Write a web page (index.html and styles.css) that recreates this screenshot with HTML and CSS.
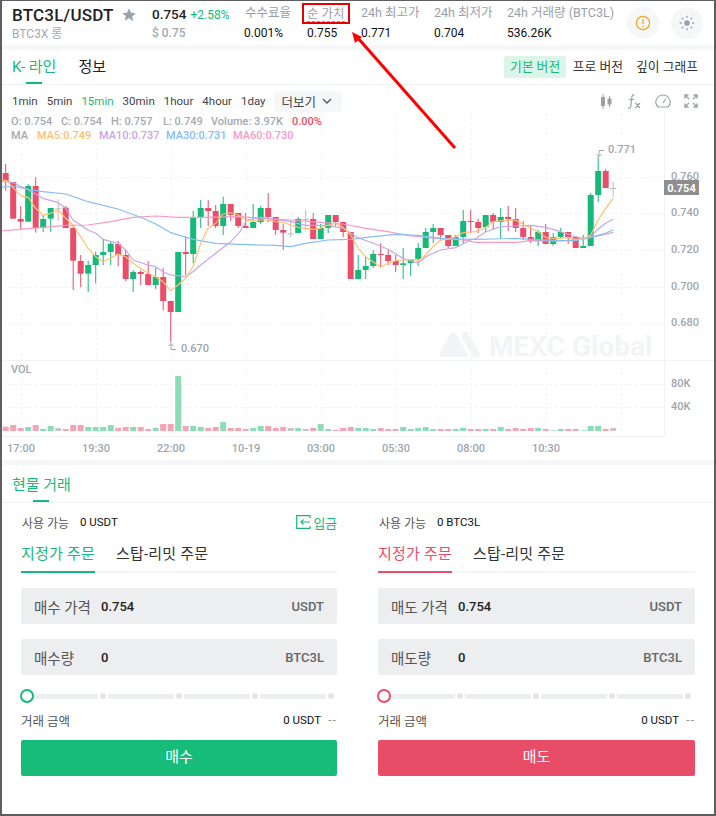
FILE: index.html
```html
<!DOCTYPE html>
<html lang="ko">

<head>
    <meta charset="UTF-8">
    <meta name="viewport" content="width=device-width, initial-scale=1.0">
    <title>BTC3L/USDT</title>
    <link rel="stylesheet" href="styles.css">
</head>

<body>
    <div class="frame">
        <!-- 상단 시세 -->
        <div class="header">
            <div class="symbol">
                <div class="symbol-name">BTC3L/USDT
                    <svg class="star" viewBox="0 0 14 14"><path d="M7 0.3l2 4.4 4.8.5-3.6 3.2 1 4.8L7 10.3l-4.2 2.4 1-4.8L.2 5.2 5 4.7z" /></svg>
                </div>
                <div class="symbol-sub">BTC3X 롱</div>
            </div>
            <div class="stat stat-price">
                <div class="price-line"><span class="price">0.754</span> <span class="change">+2.58%</span></div>
                <div class="stat-value muted">$ 0.75</div>
            </div>
            <div class="stat stat-fee">
                <div class="stat-label">수수료율</div>
                <div class="stat-value">0.001%</div>
            </div>
            <div class="stat stat-nav">
                <div class="stat-label nav-label"><span>순 가치</span></div>
                <div class="stat-value">0.755</div>
            </div>
            <div class="stat stat-high">
                <div class="stat-label">24h 최고가</div>
                <div class="stat-value">0.771</div>
            </div>
            <div class="stat stat-low">
                <div class="stat-label">24h 최저가</div>
                <div class="stat-value">0.704</div>
            </div>
            <div class="stat">
                <div class="stat-label">24h 거래량 (BTC3L)</div>
                <div class="stat-value">536.26K</div>
            </div>
            <div class="round-btns">
                <div class="round-btn">
                    <svg viewBox="0 0 16 16" fill="none" stroke="#f5a623" stroke-width="1.3"><circle cx="8" cy="8" r="6.6" /><path d="M8 4v5M8 10.8v1.2" /></svg>
                </div>
                <div class="round-btn">
                    <svg viewBox="0 0 18 18" fill="#9aa0a8" stroke="#9aa0a8" stroke-width="1.5"><circle cx="9" cy="9" r="3.2" stroke="none" /><path d="M9 .8v2.4M9 14.8v2.4M.8 9h2.4M14.8 9h2.4M3.2 3.2l1.7 1.7M13.1 13.1l1.7 1.7M3.2 14.8l1.7-1.7M13.1 4.9l1.7-1.7" /></svg>
                </div>
            </div>
        </div>
        <div class="strip"></div>

        <!-- 차트 탭 -->
        <div class="tabs">
            <a class="tab active" href="#">K- 라인</a>
            <a class="tab" href="#">정보</a>
            <div class="versions">
                <a class="version on" href="#">기본 버전</a>
                <a class="version" href="#">프로 버전</a>
                <a class="version" href="#">깊이 그래프</a>
            </div>
        </div>

        <div class="toolbar">
            <span>1min</span>
            <span>5min</span>
            <span class="on">15min</span>
            <span>30min</span>
            <span>1hour</span>
            <span>4hour</span>
            <span>1day</span>
            <div class="more">더보기
                <svg viewBox="0 0 10 6" fill="none" stroke="#555" stroke-width="1.3"><path d="M1 1l4 4 4-4" /></svg>
            </div>
            <div class="tools">
                <svg class="tool-candle" viewBox="0 0 12 15" fill="#9aa0a8" stroke="#9aa0a8"><path d="M3 0v15M9.5 2v11" /><rect x="1" y="3" width="4" height="9" stroke="none" /><rect x="7.5" y="4.5" width="4" height="6" stroke="none" /></svg>
                <svg class="tool-fx" viewBox="0 0 14 15" fill="none" stroke="#9aa0a8" stroke-width="1.2"><path d="M7.5 1C5.5 .4 5 1.5 4.8 3.5L3.8 12c-.2 1.8-1 2.5-2.8 2M2 5.5h5M8.5 9l4.5 5M13 9l-4.5 5" /></svg>
                <svg class="tool-gauge" viewBox="0 0 16 14" fill="none" stroke="#9aa0a8" stroke-width="1.2"><path d="M3 13h10c3-3.500 2.500-6.500 1-8.500C12.500 2 10.500 1 8 1S3.500 2 2 4.500C.5 6.500 0 9.500 3 13z" /><path d="M8 9l3-4.500" /></svg>
                <svg class="tool-full" viewBox="0 0 14 14" fill="none" stroke="#9aa0a8" stroke-width="1.4"><path d="M1 4.500V1h3.500M1 1l4 4M13 4.500V1H9.500M13 1L9 5M1 9.500V13h3.500M1 13l4-4M13 9.500V13H9.500M13 13L9 9" /></svg>
            </div>
        </div>

        <!-- 차트 -->
        <div class="chart">
            <div class="legend">
                <div class="legend-row">
                    <span class="w-o">O: 0.754</span>
                    <span class="w-o">C: 0.754</span>
                    <span class="w-h">H: 0.757</span>
                    <span class="w-l">L: 0.749</span>
                    <span class="w-v">Volume: 3.97K</span>
                    <span class="down">0.00%</span>
                </div>
                <div class="legend-row">
                    <span class="w-ma">MA</span>
                    <span class="ma5 w-5">MA5:0.749</span>
                    <span class="ma10 w-10">MA10:0.737</span>
                    <span class="ma30 w-30">MA30:0.731</span>
                    <span class="ma60">MA60:0.730</span>
                </div>
            </div>
            <svg class="chart-svg" width="716" height="347" viewBox="0 113 716 347">
                <g id="grid"></g>
                <g class="mark">
                    <path d="M441 355l10-19c1-2 3-2 4 0l11 19z" stroke="#f3f4f5" stroke-width="4" stroke-linejoin="round" />
                    <path d="M465 336l11 18" stroke="#f3f4f5" stroke-width="8" stroke-linecap="round" fill="none" />
                    <text x="489" y="356">MEXC Global</text>
                </g>
                <g id="volumes"></g>
                <g id="candles"></g>
                <g id="lines" fill="none"></g>
                <g class="axis">
                    <text x="671" y="180">0.760</text>
                    <text x="671" y="216">0.740</text>
                    <text x="671" y="253">0.720</text>
                    <text x="671" y="290">0.700</text>
                    <text x="671" y="326">0.680</text>
                    <text x="671" y="387">80K</text>
                    <text x="671" y="410">40K</text>
                    <text x="11" y="373">VOL</text>
                    <text x="181" y="352">0.670</text>
                    <text x="608" y="153">0.771</text>
                    <path class="tip" d="M176 349.500h-5v-6m-2.500 2.500l2.500-2.500 2.500 2.500" />
                    <path class="tip" d="M604 150.500h-5v6m-2.500-2.500l2.500 2.500 2.500-2.500" />
                </g>
                <g class="axis times">
                    <text x="21" y="452">17:00</text>
                    <text x="96" y="452">19:30</text>
                    <text x="171" y="452">22:00</text>
                    <text x="246" y="452">10-19</text>
                    <text x="321" y="452">03:00</text>
                    <text x="396" y="452">05:30</text>
                    <text x="471" y="452">08:00</text>
                    <text x="546" y="452">10:30</text>
                </g>
                <rect x="664" y="180" width="35" height="15" fill="#8e8e8e" />
                <text class="last-price" x="681.500" y="192">0.754</text>
            </svg>
        </div>
        <div class="strip"></div>

        <!-- 현물 거래 -->
        <div class="tabs trade-tabs">
            <a class="tab active" href="#">현물 거래</a>
        </div>
        <div class="panels">
            <div class="panel buy">
                <div class="avail">
                    <span class="avail-label">사용 가능</span>
                    <span class="avail-value">0 USDT</span>
                    <a class="deposit" href="#">
                        <svg viewBox="0 0 15 14" fill="none" stroke="#16b979" stroke-width="1.200"><path d="M14 3V.7H.7v12.600H14V11M14 7H5M7.500 4.500L5 7l2.500 2.500" /></svg>입금</a>
                </div>
                <div class="order-tabs">
                    <a class="order-tab active" href="#">지정가 주문</a>
                    <a class="order-tab" href="#">스탑-리밋 주문</a>
                </div>
                <div class="field">
                    <span class="field-label">매수 가격</span>
                    <span class="field-value">0.754</span>
                    <span class="field-unit">USDT</span>
                </div>
                <div class="field">
                    <span class="field-label">매수량</span>
                    <span class="field-value">0</span>
                    <span class="field-unit">BTC3L</span>
                </div>
                <div class="slider">
                    <span class="knob"></span>
                    <span class="seg"></span><span class="dot"></span>
                    <span class="seg"></span><span class="dot"></span>
                    <span class="seg"></span><span class="dot"></span>
                    <span class="seg"></span><span class="dot"></span>
                </div>
                <div class="total">
                    <span class="total-label">거래 금액</span>
                    <span class="total-value">0 USDT</span>
                    <span class="total-dash">--</span>
                </div>
                <a class="submit" href="#">매수</a>
            </div>

            <div class="panel sell">
                <div class="avail">
                    <span class="avail-label">사용 가능</span>
                    <span class="avail-value">0 BTC3L</span>
                </div>
                <div class="order-tabs">
                    <a class="order-tab active" href="#">지정가 주문</a>
                    <a class="order-tab" href="#">스탑-리밋 주문</a>
                </div>
                <div class="field">
                    <span class="field-label">매도 가격</span>
                    <span class="field-value">0.754</span>
                    <span class="field-unit">USDT</span>
                </div>
                <div class="field">
                    <span class="field-label">매도량</span>
                    <span class="field-value">0</span>
                    <span class="field-unit">BTC3L</span>
                </div>
                <div class="slider">
                    <span class="knob"></span>
                    <span class="seg"></span><span class="dot"></span>
                    <span class="seg"></span><span class="dot"></span>
                    <span class="seg"></span><span class="dot"></span>
                    <span class="seg"></span><span class="dot"></span>
                </div>
                <div class="total">
                    <span class="total-label">거래 금액</span>
                    <span class="total-value">0 USDT</span>
                    <span class="total-dash">--</span>
                </div>
                <a class="submit" href="#">매도</a>
            </div>
        </div>

        <!-- 빨간 화살표 주석 -->
        <svg class="annotation" width="716" height="816" viewBox="0 0 716 816">
            <path d="M455 148L357 37" stroke="#f00" stroke-width="3" />
            <path d="M352 32l10 5-7 6z" fill="#f00" />
        </svg>
    </div>

    <script src="chart.js"></script>
</body>

</html>
```
FILE: styles.css
```css
* {
    box-sizing: border-box;
}

body {
    margin: 0;
    background-color: #fff;
    font-family: Roboto, "Noto Sans CJK KR", sans-serif;
    color: #222;
}

a {
    text-decoration: none;
    color: inherit;
}

.frame {
    position: relative;
    width: 716px;
    height: 816px;
    overflow: hidden;
}

/* 스크린샷 테두리 */
.frame::after {
    content: "";
    position: absolute;
    inset: 0;
    border: 2px solid #5f5f5f;
    border-top-width: 1px;
    pointer-events: none;
}

.strip {
    height: 5px;
    background-color: #f6f7f8;
}

/* 상단 시세 */
.header {
    display: flex;
    height: 45px;
    padding: 3px 13px 0 12px;
}

.symbol {
    width: 140px;
}

.symbol-name {
    display: flex;
    align-items: center;
    height: 24px;
    font-size: 17px;
    font-weight: 500;
    letter-spacing: .2px;
}

.star {
    width: 14px;
    height: 14px;
    margin-left: 8px;
    fill: #9aa3ad;
}

.symbol-sub {
    height: 18px;
    line-height: 15px;
    font-size: 12px;
    color: #a4a9b0;
}

.stat-price {
    width: 93px;
}

.stat-fee {
    width: 57px;
}

.stat-nav {
    width: 59px;
}

.stat-high,
.stat-low {
    width: 73px;
}

.price-line {
    height: 21px;
    line-height: 22px;
}

.price {
    font-size: 13.500px;
    font-weight: 500;
}

.change {
    font-size: 12px;
    color: #16b979;
}

.stat-label {
    height: 21px;
    line-height: 20px;
    font-size: 12.500px;
    color: #9aa0a8;
    white-space: nowrap;
}

.stat-value {
    height: 18px;
    line-height: 18px;
    font-size: 12px;
    color: #111;
}

.stat-value.muted {
    font-weight: 500;
    color: #a4a9b0;
}

.stat-fee .stat-value {
    margin-left: -1px;
}

.stat-nav .stat-value {
    padding-left: 5px;
}

.nav-label {
    width: 48px;
    padding-left: 3px;
    border: 2px solid #e80000;
    line-height: 17px;
    overflow: hidden;
}

.nav-label span {
    border-bottom: 1px dashed #999;
}

.round-btns {
    display: flex;
    gap: 12px;
    margin-left: auto;
    height: 32px;
    margin-top: 4px;
}

.round-btn {
    display: flex;
    align-items: center;
    justify-content: center;
    width: 32px;
    height: 32px;
    border-radius: 50%;
    background-color: #f6f7f8;
}

.round-btn svg {
    width: 16px;
    height: 16px;
}

/* 탭 */
.tabs {
    display: flex;
    align-items: center;
    gap: 22px;
    height: 35px;
    padding: 0 12px;
    border-bottom: 1px solid #f1f2f3;
}

.tab {
    position: relative;
    display: block;
    height: 34px;
    line-height: 35px;
    font-size: 15px;
}

.tab.active {
    color: #16b979;
}

.tab.active::after {
    content: "";
    position: absolute;
    left: 50%;
    bottom: 0;
    width: 16px;
    height: 2px;
    margin-left: -8px;
    background-color: #16b979;
}

.versions {
    display: flex;
    align-items: center;
    margin-left: auto;
    font-size: 12.800px;
    color: #333;
}

.version {
    height: 22px;
    line-height: 22px;
    padding: 0 6px;
    margin-left: 1px;
    border-radius: 2px;
    white-space: nowrap;
}

.version.on {
    padding: 0 5.500px;
    background-color: #dcf5e9;
    color: #16b979;
}

.toolbar {
    display: flex;
    align-items: center;
    gap: 9px;
    height: 28px;
    padding: 4px 18px 0 12px;
    font-size: 11.500px;
    color: #444;
}

.toolbar .on {
    color: #16b979;
}

.more {
    display: flex;
    align-items: center;
    gap: 6px;
    width: 68px;
    height: 21px;
    margin-left: -1px;
    padding-left: 8px;
    border-radius: 2px;
    background-color: #f6f7f8;
    font-size: 12.500px;
}

.more svg {
    width: 10px;
    height: 6px;
}

.tools {
    display: flex;
    align-items: center;
    margin-left: auto;
}

.tools svg {
    display: block;
}

.tool-candle {
    width: 12px;
    height: 15px;
}

.tool-fx {
    width: 14px;
    height: 15px;
    margin-left: 15px;
}

.tool-gauge {
    width: 16px;
    height: 14px;
    margin-left: 14px;
}

.tool-full {
    width: 14px;
    height: 14px;
    margin-left: 13px;
}

/* 차트 */
.chart {
    position: relative;
    height: 347px;
}

.chart-svg {
    display: block;
}

.legend {
    position: absolute;
    top: 2px;
    left: 11px;
    font-size: 11px;
    font-weight: 500;
    line-height: 14px;
    color: #a4a9b0;
}

.legend-row {
    display: flex;
    white-space: nowrap;
}

.w-o {
    width: 50px;
}

.w-h {
    width: 52px;
}

.w-l {
    width: 48px;
}

.w-v {
    width: 81px;
}

.w-ma {
    width: 26px;
}

.w-5 {
    width: 62px;
}

.w-10,
.w-30 {
    width: 67px;
}

.down {
    color: #e94d69;
}

.ma5 {
    color: #ffc071;
}

.ma10 {
    color: #c8a5e8;
}

.ma30 {
    color: #85bdf5;
}

.ma60 {
    color: #f79ac4;
}

.mark {
    fill: #f3f4f5;
}

.mark text {
    font-size: 28px;
    font-weight: 700;
}

.axis text {
    font-size: 11px;
    font-weight: 500;
    fill: #a0a5ad;
}

.times text {
    text-anchor: middle;
}

.axis .tip {
    fill: none;
    stroke: #a0a5ad;
}

.last-price {
    text-anchor: middle;
    font-size: 11px;
    font-weight: 700;
    fill: #fff;
}

/* 현물 거래 */
.trade-tabs {
    height: 38px;
}

.trade-tabs .tab {
    height: 37px;
    line-height: 40px;
}

.panels {
    display: grid;
    grid-template-columns: 316px 317px;
    gap: 41px;
    padding: 0 21px;
}

.avail {
    display: flex;
    align-items: center;
    height: 38px;
    padding-left: 1px;
}

.avail-label {
    width: 58px;
    font-size: 12px;
    color: #555;
}

.avail-value {
    font-size: 11.500px;
    color: #111;
}

.deposit {
    display: flex;
    align-items: center;
    gap: 2px;
    margin-left: auto;
    font-size: 12.800px;
    color: #16b979;
}

.deposit svg {
    width: 15px;
    height: 14px;
}

.order-tabs {
    display: flex;
    gap: 21px;
    height: 32px;
    border-bottom: 2px solid #f3f4f5;
    font-size: 15px;
    letter-spacing: .2px;
    color: #333;
}

.order-tab {
    height: 32px;
    line-height: 26px;
    white-space: nowrap;
}

.buy .order-tab.active {
    border-bottom: 2px solid #16b979;
    color: #16b979;
}

.sell .order-tab.active {
    border-bottom: 2px solid #e94d69;
    color: #e94d69;
}

.field {
    display: flex;
    align-items: center;
    height: 36px;
    margin-top: 15px;
    padding: 0 13px;
    border-radius: 2px;
    background-color: #edeef0;
}

.field-label {
    width: 67px;
    font-size: 14.500px;
    color: #555;
}

.field-value {
    font-size: 13px;
    font-weight: 500;
}

.field-unit {
    margin-left: auto;
    font-size: 13px;
    font-weight: 500;
    color: #666;
}

.slider {
    display: flex;
    align-items: center;
    gap: 2px;
    height: 14px;
    margin: 14px 0 0 -1px;
}

.knob {
    position: relative;
    width: 14px;
    height: 14px;
    margin-right: -4px;
    border: 2px solid;
    border-radius: 50%;
    background-color: #fff;
}

.buy .knob {
    border-color: #16b979;
}

.sell .knob {
    border-color: #e94d69;
}

.seg {
    width: 66px;
    height: 5px;
    background-color: #edeef0;
}

.dot {
    width: 6px;
    height: 6px;
    border-radius: 50%;
    background-color: #e3e5e8;
}

.total {
    display: flex;
    align-items: center;
    height: 18px;
    margin-top: 8px;
}

.total-label {
    font-size: 12.500px;
    color: #555;
}

.total-value {
    margin-left: auto;
    font-size: 11.500px;
    color: #111;
}

.total-dash {
    width: 16px;
    text-align: right;
    font-size: 12px;
    letter-spacing: 1px;
    color: #999;
}

.submit {
    display: block;
    height: 36px;
    margin-top: 11px;
    border-radius: 2px;
    line-height: 35px;
    text-align: center;
    font-size: 15px;
    color: #fff;
}

.buy .submit {
    background-color: #17bb7a;
}

.sell .submit {
    background-color: #e84d68;
}

.annotation {
    position: absolute;
    top: 0;
    left: 0;
    pointer-events: none;
}
```
FILE: chart.js
```js
// 차트 데이터: y 값은 차트 원점(y=140) 기준 1/3 픽셀 단위
var GREEN = '#16b979', RED = '#e94d69', GRAY = '#bdbdbd';
var VOL_GREEN = '#8cdcb8', VOL_RED = '#f4a4b4', VOL_GRAY = '#c6c6c6';

function py(v) { return 140 + v / 3; }

// [색, 꼬리 위, 몸통 위, 몸통 아래, 꼬리 아래, 거래량 막대 위]
var candles = [
    ['r', 72, 99, 126, 152, 215], ['r', 126, 126, 236, 236, 210], ['r', 198, 237, 245, 270, 219],
    ['g', 132, 138, 245, 245, 216], ['r', 112, 138, 264, 278, 210], ['g', 226, 237, 264, 276, 222],
    ['g', 204, 204, 236, 276, 213], ['n', 178, 205, 206, 242, 219], ['r', 198, 203, 264, 264, 222],
    ['r', 254, 264, 362, 450, 210], ['r', 345, 363, 401, 441, 210], ['g', 362, 375, 401, 456, 216],
    ['g', 335, 345, 375, 430, 216], ['g', 296, 336, 345, 375, 216], ['g', 305, 311, 336, 375, 210],
    ['r', 303, 312, 345, 378, 219], ['r', 330, 345, 417, 423, 216], ['g', 390, 396, 417, 456, 216],
    ['r', 391, 396, 402, 435, 216], ['r', 363, 402, 435, 435, 222], ['g', 384, 411, 435, 447, 219],
    ['r', 384, 411, 483, 511, 207], ['r', 483, 483, 516, 606, 207], ['g', 336, 336, 516, 516, 63],
    ['r', 290, 336, 342, 405, 213], ['g', 212, 231, 342, 370, 213], ['g', 180, 204, 231, 264, 216],
    ['r', 180, 204, 213, 258, 219], ['r', 195, 213, 258, 264, 216], ['g', 170, 192, 258, 285, 201],
    ['r', 192, 192, 225, 243, 219], ['r', 219, 219, 258, 264, 219], ['r', 219, 258, 264, 264, 222],
    ['g', 192, 246, 264, 264, 219], ['g', 198, 204, 246, 252, 213], ['r', 159, 204, 231, 246, 213],
    ['r', 231, 231, 270, 285, 219], ['r', 252, 270, 278, 330, 216], ['n', 240, 280, 282, 291, 219],
    ['g', 231, 237, 279, 279, 219], ['n', 210, 237, 239, 270, 222], ['r', 219, 237, 297, 297, 219],
    ['g', 252, 264, 297, 297, 207], ['g', 225, 225, 264, 279, 222], ['r', 225, 225, 246, 258, 225],
    ['r', 246, 246, 276, 291, 219], ['r', 276, 276, 417, 417, 216], ['g', 345, 390, 417, 417, 219],
    ['g', 351, 378, 390, 417, 219], ['g', 330, 342, 378, 384, 222], ['r', 309, 342, 345, 381, 219],
    ['r', 330, 345, 363, 375, 222], ['r', 345, 363, 375, 396, 222], ['g', 324, 370, 375, 417, 216],
    ['g', 357, 357, 369, 408, 222], ['g', 309, 324, 357, 378, 219], ['g', 264, 276, 324, 324, 216],
    ['g', 252, 264, 276, 309, 222], ['r', 264, 264, 285, 303, 222], ['r', 285, 285, 318, 324, 222],
    ['g', 285, 291, 318, 318, 222], ['g', 210, 243, 291, 312, 219], ['r', 210, 243, 245, 279, 222],
    ['r', 237, 246, 264, 279, 222], ['g', 225, 225, 261, 276, 222], ['r', 219, 225, 246, 270, 222],
    ['g', 204, 231, 246, 297, 216], ['r', 198, 231, 237, 273, 222], ['r', 204, 237, 264, 276, 219],
    ['r', 243, 264, 291, 300, 222], ['r', 258, 291, 303, 309, 219], ['g', 270, 276, 303, 318, 219],
    ['r', 252, 276, 312, 312, 222], ['g', 279, 291, 312, 318, 226], ['g', 264, 276, 291, 297, 222],
    ['r', 276, 276, 291, 312, 222], ['r', 291, 291, 324, 324, 222], ['g', 285, 318, 324, 324, 226],
    ['g', 159, 165, 318, 318, 213], ['g', 51, 93, 165, 186, 213], ['r', 87, 93, 144, 144, 222],
    ['n', 126, 144, 146, 171, 219]
];

// 이동평균선: 구간별 x 오프셋, [x, y, x, y ...] (1/3 픽셀 단위)
var lines = [
    {
        color: '#f79ac4', parts: [
            [0, [0, 273, 60, 268, 129, 262, 197, 256, 264, 255, 332, 245, 400, 232, 467, 228, 534, 232, 624, 232, 720, 230]],
            [240, [85, 236, 152, 240, 242, 247, 309, 252, 377, 265, 444, 275, 512, 288, 602, 296, 669, 300]],
            [476, [0, 307, 60, 307, 120, 307, 164, 302, 254, 303, 321, 297, 366, 288, 412, 277]]
        ]
    },
    {
        color: '#85bdf5', parts: [
            [0, [0, 142, 40, 138, 85, 148, 129, 155, 197, 162, 264, 185, 354, 207, 422, 232, 467, 252, 512, 278, 579, 298, 647, 310, 720, 313]],
            [240, [60, 315, 107, 316, 152, 320, 197, 310, 264, 300, 332, 298, 400, 290, 467, 283, 534, 286, 602, 295, 700, 298]],
            [476, [50, 297, 120, 295, 164, 298, 254, 302, 299, 302, 344, 292, 389, 280, 412, 269]]
        ]
    },
    {
        color: '#c8a5e8', parts: [
            [0, [0, 122, 40, 128, 85, 150, 129, 175, 174, 188, 197, 205, 219, 240, 264, 270, 287, 280, 309, 298, 354, 310, 377, 330, 399, 360, 444, 375, 467, 380, 489, 395, 512, 405, 557, 410, 579, 395, 602, 375, 647, 340, 692, 305, 720, 275]],
            [240, [20, 240, 62, 232, 107, 238, 152, 245, 197, 256, 264, 256, 309, 265, 354, 293, 400, 310, 444, 328, 489, 355, 534, 370, 557, 350, 602, 330, 647, 323, 692, 300]],
            [476, [0, 295, 30, 275, 74, 260, 119, 258, 164, 256, 209, 262, 254, 275, 299, 290, 321, 296, 344, 290, 366, 268, 389, 250, 412, 238]]
        ]
    },
    {
        color: '#ffc071', parts: [
            [0, [0, 120, 20, 122, 50, 155, 62, 167, 85, 172, 107, 205, 129, 226, 152, 220, 174, 210, 197, 235, 219, 255, 242, 290, 264, 325, 287, 350, 309, 365, 332, 355, 354, 342, 377, 350, 399, 370, 422, 385, 444, 400, 467, 410, 489, 425, 512, 452, 534, 435, 557, 415, 579, 380, 602, 310, 624, 265, 647, 250, 669, 222, 692, 218, 714, 225]],
            [240, [17, 240, 40, 243, 62, 240, 85, 240, 107, 245, 129, 247, 152, 255, 174, 262, 197, 265, 219, 268, 242, 265, 264, 255, 287, 250, 309, 262, 332, 285, 354, 325, 377, 350, 399, 365, 422, 382, 444, 370, 467, 362, 489, 360, 512, 358, 534, 362, 557, 345, 579, 320, 602, 300, 624, 298, 647, 290, 669, 278, 692, 276]],
            [476, [0, 275, 29, 262, 51, 245, 96, 240, 119, 241, 141, 253, 164, 265, 186, 275, 209, 292, 231, 295, 254, 295, 276, 292, 299, 298, 321, 298, 344, 285, 366, 240, 389, 205, 412, 175]]
        ]
    }
];

function drawGrid() {
    var html = '';
    var yLines = [177.5, 213.5, 250.5, 287.5, 323.5, 384.5, 407.5];
    yLines.forEach(function (y) {
        html += '<path d="M0 ' + y + 'H664" stroke="#eff0f2" stroke-dasharray="2 3" />';
    });
    for (var x = 21.5; x < 660; x += 75) {
        html += '<path d="M' + x + ' 113V436" stroke="#f1f2f3" stroke-dasharray="2 3" />';
    }
    html += '<path d="M0 360.5H716M0 436.5H664M664.5 113V436" stroke="#f1f2f3" />';
    document.getElementById('grid').innerHTML = html;
}

function drawCandles() {
    var volHtml = '', candleHtml = '';
    candles.forEach(function (c, i) {
        var x = 5.7 + 7.5 * i;
        var color = c[0] === 'g' ? GREEN : c[0] === 'r' ? RED : GRAY;
        var volColor = c[0] === 'g' ? VOL_GREEN : c[0] === 'r' ? VOL_RED : VOL_GRAY;
        var top = py(c[2]);
        var height = Math.max(py(c[3]) - top, 1);
        candleHtml += '<path d="M' + x + ' ' + py(c[1]) + 'V' + py(c[4]) + '" stroke="' + color + '" />';
        candleHtml += '<rect x="' + (x - 3) + '" y="' + top + '" width="6" height="' + height + '" fill="' + color + '" />';
        // 거래량은 줌 좌표 기준 y=355, 바닥 228
        var volTop = 355 + c[5] / 3;
        volHtml += '<rect x="' + (x - 3) + '" y="' + volTop + '" width="6" height="' + (431 - volTop) + '" fill="' + volColor + '" />';
    });
    document.getElementById('candles').innerHTML = candleHtml;
    document.getElementById('volumes').innerHTML = volHtml;
}

function drawLines() {
    var html = '';
    lines.forEach(function (line) {
        var pts = [];
        line.parts.forEach(function (part) {
            for (var i = 0; i < part[1].length; i += 2) {
                pts.push((part[0] + part[1][i] / 3).toFixed(1) + ',' + py(part[1][i + 1]).toFixed(1));
            }
        });
        html += '<polyline points="' + pts.join(' ') + '" stroke="' + line.color + '" stroke-width="1.2" stroke-linejoin="round" />';
    });
    document.getElementById('lines').innerHTML = html;
}

drawGrid();
drawCandles();
drawLines();
```
